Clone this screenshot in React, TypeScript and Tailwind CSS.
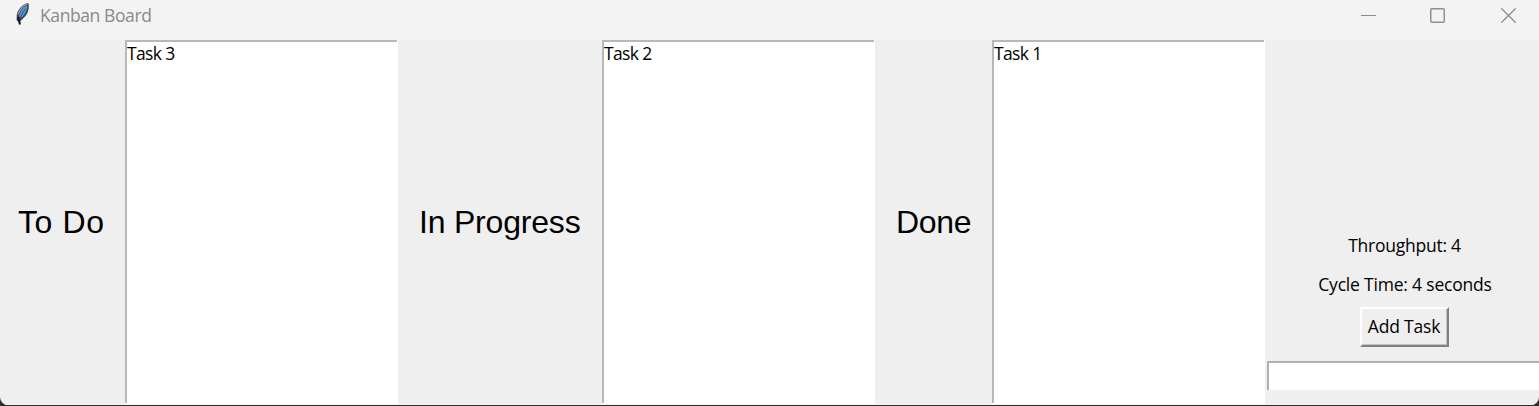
import React from "react";

function Feather() {
  return (
    <svg width="16" height="24" viewBox="0 0 16 24" className="block">
      <path d="M14.3 1 C9.5 1.5 3.5 7.5 2.8 12.5 L2.6 18 L5 20.5 L7.5 18 L11.5 14 C14.5 10.5 15.5 4.5 14.3 1Z" fill="#3d434d" />
      <path d="M13.4 3 C10 4.5 6.2 9 5 14.5 L6.8 16 C10.8 13 13.6 8 13.4 3Z" fill="#5094e2" />
      <path d="M13 2 C9.5 3.5 5.3 8 4.2 12.5" fill="none" stroke="#a4abb4" strokeWidth="1.2" />
      <path d="M11.5 6.5 C8.8 10 6.6 14.5 5 19" fill="none" stroke="#2b4f80" strokeWidth="0.9" />
      <path d="M4.2 15 L6 22.5" stroke="#16181c" strokeWidth="2" />
    </svg>
  );
}

function TitleBar() {
  return (
    <header className="flex h-10 shrink-0 items-start bg-[#f3f3f3]">
      <div className="pl-[14px] pt-[2px]">
        <Feather />
      </div>
      <h1 className="pl-[10px] pt-[3px] text-[17.5px] leading-6 tracking-[-0.4px] text-[#8a8a8a]">Kanban Board</h1>
      <div className="ml-auto flex pr-[23px] pt-[8px]">
        <svg width="15" height="15" className="mr-[54px]">
          <path d="M0 7.5H15" stroke="#8c8c8c" />
        </svg>
        <svg width="15" height="15" className="mr-[56px]">
          <rect x="0.75" y="0.75" width="13.5" height="13.5" rx="1.2" fill="none" stroke="#909090" strokeWidth="1.5" />
        </svg>
        <svg width="15" height="15">
          <path d="M0.3 0.3L14.7 14.7M14.7 0.3L0.3 14.7" stroke="#8c8c8c" strokeWidth="1.3" />
        </svg>
      </div>
    </header>
  );
}

interface ColumnProps {
  title: string;
  titleClass: string;
  task: string;
}

function Column({ title, titleClass, task }: ColumnProps) {
  return (
    <section className="flex shrink-0">
      <div className={`flex items-center whitespace-nowrap pb-px font-['Liberation_Sans',Arial,sans-serif] text-[32px] leading-10 text-black ${titleClass}`}>
        {title}
      </div>
      <div className="flex w-[273px] flex-col bg-white">
        <ul className="mr-px h-[363px] border-l-2 border-t-2 border-[#b8b8b8] text-[17.5px] leading-[22px] tracking-[-0.65px] text-black">
          <li>{task}</li>
        </ul>
      </div>
    </section>
  );
}

export default function App() {
  return (
    <div className="h-[406px] w-[1539px] overflow-hidden bg-[#303030] font-['Open_Sans','Noto_Sans',sans-serif]">
      <main className="flex h-[405px] flex-col overflow-hidden rounded-b-[8px] bg-[#efefef]">
        <TitleBar />
        <div className="flex h-[365px] border-b border-[#f5f5f5]">
          <Column title="To Do" titleClass="w-[125px] pl-[18px] tracking-[0.6px]" task="Task 3" />
          <Column title="In Progress" titleClass="w-[204px] pl-[21px] tracking-[-0.2px]" task="Task 2" />
          <Column title="Done" titleClass="w-[117px] pl-[21px] tracking-[-0.3px]" task="Task 1" />
          <aside className="flex w-[274px] flex-col items-center pt-[193px] text-[17.5px] leading-6 tracking-[-0.2px] text-black">
            <p className="pl-[5px] tracking-[-0.25px]">Throughput: 4</p>
            <p className="mt-[15px] pl-[6px]">Cycle Time: 4 seconds</p>
            <button className="ml-[4px] mt-[11px] h-[40px] w-[89px] shrink-0 whitespace-nowrap border-2 border-b-[#808080] border-l-white border-r-[#808080] border-t-white bg-[#efefef] pb-[2px] tracking-[-0.2px] shadow-[inset_-1px_-1px_0_#c4c4c4]">
              Add Task
            </button>
            <input aria-label="New task" className="ml-[2px] mt-[14px] h-[29px] w-[272px] shrink-0 border-l-2 border-t-2 border-[#b0b0b0] bg-white px-1 outline-none" />
          </aside>
        </div>
      </main>
    </div>
  );
}
